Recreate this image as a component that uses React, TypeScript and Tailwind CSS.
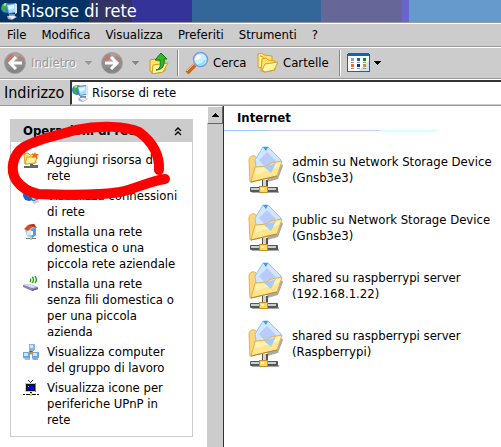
import React from "react";

interface IconProps {
  className?: string;
}

interface Task {
  label: string;
  icon: React.FC<IconProps>;
}

const NetworkIcon: React.FC<IconProps> = ({ className }) => (
  <svg viewBox="0 0 16 18" className={className} aria-hidden="true">
    <circle cx="5" cy="6" r="5" fill="#2a7fd4" />
    <path d="M1 4l3-3 4 1-1 3-3 1 1 3-2 1-2-3z" fill="#3fae3a" />
    <path d="M2 3l2-2 2 1-2 2z" fill="#b8e986" />
    <path d="M5 2l9-1v10l-7 1z" fill="#4a86c5" />
    <path d="M6 3l8-1v8l-6 1z" fill="#a8dcff" />
    <path d="M7 4l6-1v3l-5 2z" fill="#e2f6ff" />
    <path d="M14 1l2 1v9l-2 1z" fill="#d8e4f4" />
    <path d="M8 12h6v2H8z" fill="#6888bc" />
    <path d="M6 14l6-1 4 2-5 3-4-1z" fill="#a9a9dc" />
    <path d="M7 14h6l2 1-4 2z" fill="#f2f2ff" />
  </svg>
);

const RoundArrow: React.FC<IconProps & { forward?: boolean }> = ({ className, forward }) => (
  <svg viewBox="0 0 24 24" className={className} aria-hidden="true">
    <circle cx="12" cy="12" r="10.5" fill="#8f8f8f" stroke="#a2a2a2" />
    <path d="M12 2a10 10 0 0 0-9 6l8 3 9-5a10 10 0 0 0-8-4z" fill="#aaa09d" />
    <path d="M3 9l3-5 4-1 1 4-5 5zM16 4l4 4-1 3-4-4zM15 16l6 1-4 4-4-2z" fill="#b87e7a" />
    <path d="M4 18c4-3 10 0 17-4-1 5-5 8-9 8-3 0-6-1-8-4z" fill="#858585" />
    {forward ? (
      <path d="M5 12h12M11 6l6 6-6 6" fill="none" stroke="#fff" strokeWidth="3" />
    ) : (
      <path d="M19 12H7M13 6l-6 6 6 6" fill="none" stroke="#fff" strokeWidth="3" />
    )}
  </svg>
);

const UpFolderIcon: React.FC<IconProps> = ({ className }) => (
  <svg viewBox="0 0 20 22" className={className} aria-hidden="true">
    <path d="M1 8l5-1 2 2 8-1v11L4 21l-3-2z" fill="#ffe36b" stroke="#d19a14" />
    <path d="M4 13l15-2-5 9-11 2z" fill="#fff3a0" stroke="#d19a14" />
    <path d="M7 18c4-1 5-4 4-10H6l6-7 6 6h-3c1 7-2 11-8 11z" fill="#35b52f" stroke="#0f7d18" />
  </svg>
);

const SearchIcon: React.FC<IconProps> = ({ className }) => (
  <svg viewBox="0 0 24 24" className={className} aria-hidden="true">
    <path d="M2 22l8-8" stroke="#c96a16" strokeWidth="4" />
    <path d="M2 20l7-7" stroke="#ffb45c" strokeWidth="1" />
    <circle cx="15.5" cy="8.5" r="7" fill="#c4f2fb" stroke="#7b97e5" strokeWidth="1.5" />
    <path d="M10 9c0-4 3-5 6-5 0 3-2 5-6 5z" fill="#fff" />
    <path d="M13 14c4 0 6-2 7-5" fill="none" stroke="#8fdcf0" strokeWidth="2" />
  </svg>
);

const FoldersIcon: React.FC<IconProps> = ({ className }) => (
  <svg viewBox="0 0 22 20" className={className} aria-hidden="true">
    <path d="M1 1l4-1 2 2 8 1v9l-10 3-4-1z" fill="#ffe36b" stroke="#d8a01c" />
    <path d="M3 3l3 1v9l-4 2" fill="#fff2a0" stroke="#d8a01c" />
    <path d="M5 6l4-1 2 2 7 1v9L8 19l-4-1z" fill="#ffe36b" stroke="#d8a01c" />
    <path d="M8 11l13-2-4 8-9 2-3-2z" fill="#fff6a6" stroke="#d8a01c" />
  </svg>
);

const ViewsIcon: React.FC<IconProps> = ({ className }) => (
  <svg viewBox="0 0 23 19" className={className} shapeRendering="crispEdges" aria-hidden="true">
    <path d="M0 1h1V0h21v1h1v18H0z" fill="#0066cc" />
    <path d="M1 3h21v15H1z" fill="#fff" />
    <path d="M22 7v11H11z" fill="#cce6ff" />
    <path d="M4 5h3v3H4z" fill="#9999cc" />
    <path d="M10 5h3v3h-3z" fill="#0066cc" />
    <path d="M16 5h3v3h-3z" fill="#009900" />
    <path d="M4 11h3v3H4z" fill="#ff6633" />
    <path d="M10 11h3v3h-3z" fill="#003399" />
    <path d="M16 11h3v3h-3z" fill="#cc9900" />
    <path d="M4 9h3v1H4zM10 9h3v1h-3zM16 9h3v1h-3zM4 15h3v1H4zM10 15h3v1h-3zM16 15h3v1h-3z" fill="#999" />
  </svg>
);

const CaretDown: React.FC<IconProps> = ({ className }) => (
  <svg viewBox="0 0 7 4" className={className} shapeRendering="crispEdges" aria-hidden="true">
    <path d="M0 0h7v1H0zM1 1h5v1H1zM2 2h3v1H2zM3 3h1v1H3z" fill="currentColor" />
  </svg>
);

const AddPlaceIcon: React.FC<IconProps> = ({ className }) => (
  <svg viewBox="0 0 16 16" className={className} aria-hidden="true">
    <path d="M1 2l4-1 2 2 5-1 1 9-11 1z" fill="#ffe070" stroke="#d9a428" />
    <path d="M4 5h10l-2 6-10 1z" fill="#fff09a" stroke="#d9a428" />
    <path d="M7 12h3v1h5v3H1v-2h6z" fill="#5e6a6a" />
    <path d="M12 0l1 2 3 0-2 2 1 3-3-2-3 1 1-3-1-2 2 1z" fill="#f26a21" />
  </svg>
);

const ConnectionsIcon: React.FC<IconProps> = ({ className }) => (
  <svg viewBox="0 0 16 16" className={className} aria-hidden="true">
    <circle cx="6" cy="7" r="6" fill="#1d5fd0" />
    <path d="M1 5l4-3 3 3-3 4z" fill="#35a745" />
    <path d="M7 8l6-2 2 5-5 2z" fill="#9ccdf5" stroke="#33659c" />
    <path d="M9 14l6-2 1 2-5 2z" fill="#c9c9e6" />
  </svg>
);

const HomeNetworkIcon: React.FC<IconProps> = ({ className }) => (
  <svg viewBox="0 0 16 16" className={className} aria-hidden="true">
    <path d="M2 6l3-3h8v8l-4 3-5-2z" fill="#9fc8f2" />
    <path d="M8 5l5-1v7l-4 3z" fill="#5c97dd" />
    <path d="M4 6h4v5H4z" fill="#d3e8fb" />
    <path d="M8 7h2v4H8z" fill="#fff" />
    <path d="M1 5l4-4 6-1 3 4-5-1-4 4z" fill="#dd4a22" />
    <path d="M5 1l6-1 2 3-4-1z" fill="#b52c13" />
    <path d="M3 14h10v1H3z" fill="#6d7790" />
    <path d="M7 13h2v3H7z" fill="#e8c83a" />
  </svg>
);

const WirelessIcon: React.FC<IconProps> = ({ className }) => (
  <svg viewBox="0 0 16 16" className={className} aria-hidden="true">
    <path d="M0 9l6-1 9 3v2l-6 2-9-4z" fill="#8787b8" />
    <path d="M1 9l5-1 8 3-5 1z" fill="#dedef4" />
    <path d="M9 14l6-2v1l-6 2z" fill="#4f4f86" />
    <path d="M7 3c1 0 1 2 0 3M9 1c2 1 2 4 0 6M12 0c2 3 2 5 0 7" fill="none" stroke="#22a51c" strokeWidth="1.4" />
  </svg>
);

const WorkgroupIcon: React.FC<IconProps> = ({ className }) => (
  <svg viewBox="0 0 16 16" className={className} aria-hidden="true">
    <path d="M8 5v4M4 11l4-3 4 3" stroke="#4a5c86" strokeWidth="3" fill="none" />
    <rect x="6" y="0" width="6" height="6" fill="#7fb5ea" />
    <path d="M7 1h3v3H7z" fill="#c9e6ff" />
    <rect x="0" y="8" width="7" height="6" fill="#6ca6e2" />
    <path d="M1 9h4v3H1z" fill="#c9e6ff" />
    <path d="M1 14h6v2H2z" fill="#b3b8d6" />
    <rect x="9" y="8" width="7" height="6" fill="#6ca6e2" />
    <path d="M10 9h4v3h-4z" fill="#c9e6ff" />
    <path d="M9 14h6v2h-5zM6 6h5v1H6z" fill="#9fa5c8" />
    <path d="M7 8h3v2H7z" fill="#e08a1c" />
  </svg>
);

const UpnpIcon: React.FC<IconProps> = ({ className }) => (
  <svg viewBox="0 0 16 16" className={className} shapeRendering="crispEdges" aria-hidden="true">
    <path d="M5 0h1v1H5zM6 1h1v1H6zM7 2h1v1H7zM8 1h1v1H8zM9 0h1v1H9z" fill="#333" />
    <path d="M3 3h10v9H3z" fill="#777" />
    <path d="M2 3h10v9H2z" fill="#ccc" />
    <path d="M3 4h9v7H3z" fill="#111" />
    <path d="M4 5h7v5H4z" fill="#0000f0" />
    <path d="M5 6h1v1H5z" fill="#6cf" />
    <path d="M0 14h2v1H0zM3 14h10v1H3zM14 14h2v1h-2zM7 12h2v2H7z" fill="#111" />
    <path d="M7 13h2v3H7z" fill="#e8e020" />
  </svg>
);

const SharedFolderIcon: React.FC<IconProps> = ({ className }) => (
  <svg viewBox="0 0 36 48" className={className} aria-hidden="true">
    <path d="M3 45h28v2H4zM34 18l1 2-5 13-14 4z" fill="#aaa" />
    <path d="M1 14c0-3 4-6 7-3l3 3v14l-7 8H2z" fill="#ffd778" stroke="#e6b04c" />
    <path d="M7 14L15 1h5l13 13-3 6-15 6-7-5z" fill="#d3e6ff" stroke="#8cc6f5" />
    <path d="M11 14l8-8 9 9-9 8z" fill="#b9cbfa" />
    <path d="M15 1l3 4 2-4z" fill="#3b9ce8" />
    <path d="M7 21l12-1 4-3 11-2-5 15-26 6z" fill="#ffe58c" stroke="#e6b04c" />
    <path d="M8 22l11-1 5-3 9-2-2 5-24 8z" fill="#fff2b0" />
    <path d="M16 21l12-4-5 10z" fill="#a6ccf5" />
    <path d="M3 36l26-6" stroke="#bc8520" fill="none" />
    <path d="M14 34h6v8h-6z" fill="#555" />
    <path d="M15 34h3v8h-3z" fill="#d0d6d6" />
    <rect x="2" y="41" width="28" height="5" rx="1" fill="#535858" />
    <path d="M3 42h25v2H3z" fill="#c7cfcf" />
    <rect x="11.5" y="40.5" width="8" height="6" fill="#ffd75a" stroke="#c98f20" />
    <path d="M13 42h3v2h-3z" fill="#fff8c8" />
  </svg>
);

const titleStripes = [
  { color: "#003366", to: 89 },
  { color: "#333366", to: 132 },
  { color: "#333399", to: 192 },
  { color: "#336699", to: 321 },
  { color: "#666699", to: 402 },
  { color: "#6666cc", to: 409 },
];

const titleBackground =
  "linear-gradient(90deg, " +
  titleStripes
    .map(({ color, to }, i) => `${color} ${i ? titleStripes[i - 1].to : 0}px ${to}px`)
    .join(", ") +
  ", #6699cc 409px)";

const menus = ["File", "Modifica", "Visualizza", "Preferiti", "Strumenti", "?"];

const tasks: Task[] = [
  { label: "Aggiungi risorsa di rete", icon: AddPlaceIcon },
  { label: "Visualizza connessioni di rete", icon: ConnectionsIcon },
  { label: "Installa una rete domestica o una piccola rete aziendale", icon: HomeNetworkIcon },
  { label: "Installa una rete senza fili domestica o per una piccola azienda", icon: WirelessIcon },
  { label: "Visualizza computer del gruppo di lavoro", icon: WorkgroupIcon },
  { label: "Visualizza icone per periferiche UPnP in rete", icon: UpnpIcon },
];

const shares = [
  { name: "admin su Network Storage Device", host: "(Gnsb3e3)" },
  { name: "public su Network Storage Device", host: "(Gnsb3e3)" },
  { name: "shared su raspberrypi server", host: "(192.168.1.22)" },
  { name: "shared su raspberrypi server", host: "(Raspberrypi)" },
];

const Separator: React.FC = () => (
  <span className="h-[26px] w-0.5 shrink-0 border-r border-l border-r-white border-l-[#888]" />
);

const Toolbar: React.FC = () => (
  <div className="flex h-8 items-center border-b border-[#999] pl-[3px]">
    <button type="button" className="flex w-[89px] items-center text-[#999]" disabled>
      <RoundArrow className="mr-1 size-6 shrink-0" />
      <span className="[text-shadow:1px_1px_0_#fff]">Indietro</span>
      <CaretDown className="ml-auto h-1 w-[7px]" />
    </button>
    <button type="button" className="ml-2 flex items-center gap-2 text-[#888]" disabled aria-label="Avanti">
      <RoundArrow forward className="size-6" />
      <CaretDown className="h-1 w-[7px]" />
    </button>
    <button type="button" className="mr-2 ml-2.5 shrink-0" aria-label="Cartella superiore">
      <UpFolderIcon className="h-[22px] w-5" />
    </button>
    <Separator />
    <button type="button" className="ml-1.5 flex w-[62px] items-center gap-1">
      <SearchIcon className="size-6 shrink-0" />
      Cerca
    </button>
    <button type="button" className="ml-2.5 flex w-[76px] items-center gap-1">
      <FoldersIcon className="h-5 w-[22px] shrink-0" />
      Cartelle
    </button>
    <span className="w-1.5" />
    <Separator />
    <button type="button" className="ml-1.5 flex items-center gap-1" aria-label="Visualizza">
      <ViewsIcon className="h-[19px] w-[23px]" />
      <CaretDown className="h-1 w-[7px]" />
    </button>
  </div>
);

const TaskPane: React.FC = () => (
  <aside className="relative w-[207px] shrink-0 pt-[13px] pr-3.5 pl-2.5">
    <section className="border border-[#ccc] bg-white">
      <button
        type="button"
        className="flex h-[22px] w-full items-center justify-between bg-[#ccc] pr-2.5 pl-3 font-bold"
      >
        Operazioni di rete
        <svg viewBox="0 0 8 9" className="h-[9px] w-2" aria-hidden="true">
          <path d="M1 4l3-3 3 3M1 8l3-3 3 3" fill="none" stroke="#000" strokeWidth="1.4" />
        </svg>
      </button>
      <ul className="space-y-1 pt-2.5 pr-[13px] pb-2 pl-3">
        {tasks.map(({ label, icon: Icon }) => (
          <li key={label}>
            <a href="#" className="flex items-start gap-2">
              <Icon className="size-4 shrink-0" />
              <span>{label}</span>
            </a>
          </li>
        ))}
      </ul>
    </section>
    {/* hand-drawn marker around the first task */}
    <svg
      viewBox="0 0 180 90"
      className="pointer-events-none absolute top-3 left-0 h-[90px] w-[180px]"
      fill="none"
      aria-hidden="true"
    >
      <path
        d="M159 52C160 38 153 24 139 14C126 8 100 7 76 12C55 18 37 21 24 29C12 37 10 52 16 62C21 69 29 74 38 76C65 77 95 78 120 74C138 70 150 63 165 61"
        stroke="#f00"
        strokeWidth="10"
        strokeLinecap="round"
        strokeLinejoin="round"
      />
    </svg>
  </aside>
);

const Scrollbar: React.FC = () => (
  <div className="w-[17px] shrink-0 border-r border-[#333] bg-[#ccc]">
    <button
      type="button"
      aria-label="Scorri in alto"
      className="flex h-[18px] w-full items-center justify-center border border-t-white border-r-[#666] border-b-[#666] border-l-white"
    >
      <CaretDown className="h-1 w-[7px] rotate-180" />
    </button>
  </div>
);

const App: React.FC = () => {
  return (
    <div className="flex min-h-screen flex-col bg-[#ccc] font-['DejaVu_Sans_Condensed','DejaVu_Sans',sans-serif] text-[13px] leading-4 text-black [font-stretch:condensed]">
      <header className="flex h-[22px] items-center gap-0.5 text-white" style={{ background: titleBackground }}>
        <NetworkIcon className="h-[18px] w-[18px] shrink-0" />
        <h1 className="text-lg leading-[22px]">Risorse di rete</h1>
      </header>

      <nav className="flex h-[25px] items-center gap-[15px] border-t border-b border-[#999] pl-[7px] shadow-[inset_0_1px_0_#fff,0_1px_0_#fff]">
        {menus.map((menu) => (
          <button key={menu} type="button">
            {menu}
          </button>
        ))}
      </nav>

      <Toolbar />

      <div className="flex h-[27px] items-center border-t border-b border-t-white border-b-[#999] pl-1">
        <label htmlFor="address" className="w-[66px] shrink-0 text-base">
          Indirizzo
        </label>
        <div className="flex h-[25px] min-w-0 flex-1 items-center gap-1 border-t-2 border-b border-l-2 border-t-[#333] border-b-[#ccc] border-l-[#333] bg-white">
          <NetworkIcon className="h-[18px] w-4 shrink-0" />
          <input id="address" type="text" defaultValue="Risorse di rete" className="min-w-0 flex-1 outline-none" />
        </div>
      </div>

      <div className="flex flex-1 bg-white">
        <TaskPane />
        <Scrollbar />
        <main className="min-w-0 flex-1">
          <h2 className="pt-1 pb-1 pl-[13px] font-bold">Internet</h2>
          <div className="h-px w-[214px] bg-[linear-gradient(90deg,#99ccff_20%,#ccccff_20%_73%,#ccffff_73%)]" />
          <ul className="space-y-2.5 pt-[15px] pl-6">
            {shares.map(({ name, host }) => (
              <li key={name + host}>
                <a href="#" className="flex items-center gap-2">
                  <SharedFolderIcon className="h-12 w-9 shrink-0" />
                  <span>
                    {name}
                    <br />
                    {host}
                  </span>
                </a>
              </li>
            ))}
          </ul>
        </main>
      </div>
    </div>
  );
};

export default App;
